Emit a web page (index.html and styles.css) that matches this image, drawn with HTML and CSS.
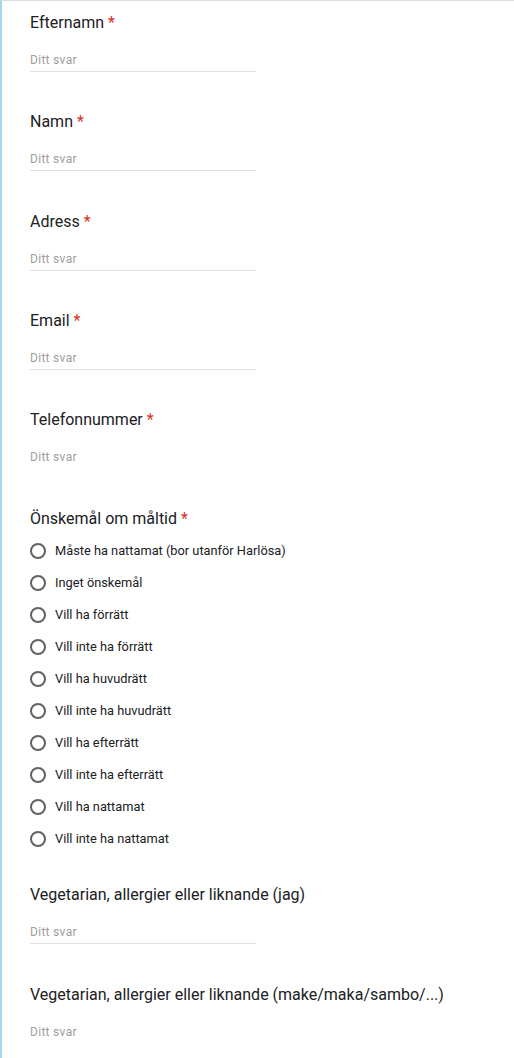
FILE: index.html
```html
<!DOCTYPE html>
<html lang="sv">
<head>
<meta charset="utf-8">
<link rel="stylesheet" href="styles.css">
</head>
<body>
<div class="page">
  <div class="q">
    <div class="label">Efternamn <span class="req">*</span></div>
    <div class="input lined">Ditt svar</div>
  </div>
  <div class="q">
    <div class="label">Namn <span class="req">*</span></div>
    <div class="input lined">Ditt svar</div>
  </div>
  <div class="q">
    <div class="label">Adress <span class="req">*</span></div>
    <div class="input lined">Ditt svar</div>
  </div>
  <div class="q">
    <div class="label">Email <span class="req">*</span></div>
    <div class="input lined">Ditt svar</div>
  </div>
  <div class="q">
    <div class="label">Telefonnummer <span class="req">*</span></div>
    <div class="input">Ditt svar</div>
  </div>
  <div class="q radioq">
    <div class="label">Önskemål om måltid <span class="req">*</span></div>
    <div class="options">
      <div class="opt"><span class="radio"></span><span>Måste ha nattamat (bor utanför Harlösa)</span></div>
      <div class="opt"><span class="radio"></span><span>Inget önskemål</span></div>
      <div class="opt"><span class="radio"></span><span>Vill ha förrätt</span></div>
      <div class="opt"><span class="radio"></span><span>Vill inte ha förrätt</span></div>
      <div class="opt"><span class="radio"></span><span>Vill ha huvudrätt</span></div>
      <div class="opt"><span class="radio"></span><span>Vill inte ha huvudrätt</span></div>
      <div class="opt"><span class="radio"></span><span>Vill ha efterrätt</span></div>
      <div class="opt"><span class="radio"></span><span>Vill inte ha efterrätt</span></div>
      <div class="opt"><span class="radio"></span><span>Vill ha nattamat</span></div>
      <div class="opt"><span class="radio"></span><span>Vill inte ha nattamat</span></div>
    </div>
  </div>
  <div class="q">
    <div class="label">Vegetarian, allergier eller liknande (jag)</div>
    <div class="input lined">Ditt svar</div>
  </div>
  <div class="q">
    <div class="label">Vegetarian, allergier eller liknande (make/maka/sambo/...)</div>
    <div class="input">Ditt svar</div>
  </div>
</div>
</body>
</html>
```
FILE: styles.css
```css
html, body {
  margin: 0;
  padding: 0;
  background: #fff;
}
body {
  font-family: Roboto, "Liberation Sans", Arial, sans-serif;
  color: #202124;
  overflow: hidden;
}
.page {
  border-left: 2px solid #a9d6ea;
  border-top: 1px solid #dadce0;
  min-height: 1058px;
  padding: 10px 0 0 28px;
  box-sizing: border-box;
}
.q {
  padding-bottom: 38.25px;
}
.label {
  font-size: 16px;
  line-height: 24px;
  color: #202124;
}
.req {
  color: #d93025;
}
.input {
  margin-top: 13px;
  width: 226px;
  height: 24px;
  box-sizing: border-box;
  padding-top: 2px;
  font-size: 12px;
  line-height: 21px;
  color: #9e9e9e;
  letter-spacing: 0.3px;
}
.input.lined {
  border-bottom: 1px solid #e0e0e0;
}
.radioq {
  padding-bottom: 28.5px;
}
.options {
  margin-top: 3.5px;
  display: flex;
  flex-direction: column;
}
.opt {
  display: flex;
  align-items: center;
  height: 32px;
  gap: 9px;
  font-size: 12.8px;
  color: #202124;
}
.radio {
  width: 16px;
  height: 16px;
  box-sizing: border-box;
  border: 2px solid #5f6368;
  border-radius: 50%;
  flex: none;
}
```
